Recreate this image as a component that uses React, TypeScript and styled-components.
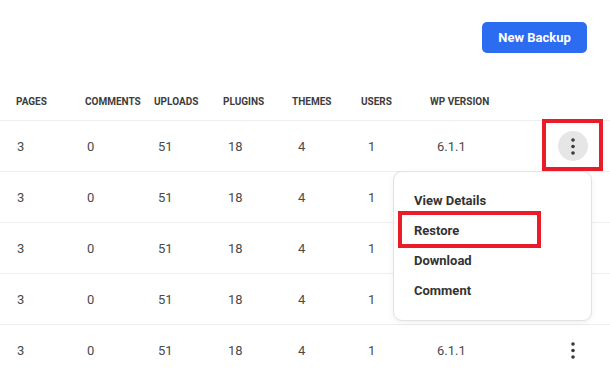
import styled, { createGlobalStyle } from "styled-components"

const GlobalStyle = createGlobalStyle`
  html, body {
    margin: 0;
    padding: 0;
    background: #fff;
    font-family: Roboto, "Liberation Sans", Arial, sans-serif;
    overflow: hidden;
  }
`

const columns = [
  { title: "Pages", key: "pages", indent: 1 },
  { title: "Comments", key: "comments", indent: 2 },
  { title: "Uploads", key: "uploads", indent: 4 },
  { title: "Plugins", key: "plugins", indent: 5 },
  { title: "Themes", key: "themes", indent: 6 },
  { title: "Users", key: "users", indent: 7 },
  { title: "WP Version", key: "wp", indent: 7 },
]

type Backup = { [key: string]: string }

const backups: Backup[] = Array.from({ length: 5 }, () => ({
  pages: "3",
  comments: "0",
  uploads: "51",
  plugins: "18",
  themes: "4",
  users: "1",
  wp: "6.1.1",
}))

const menuItems = ["View Details", "Restore", "Download", "Comment"]

const Dots = () => (
  <svg width="4" height="17" viewBox="0 0 4 17">
    <circle cx="2" cy="2" r="1.8" fill="#3a3a3a" />
    <circle cx="2" cy="8.5" r="1.8" fill="#3a3a3a" />
    <circle cx="2" cy="15" r="1.8" fill="#3a3a3a" />
  </svg>
)

const App = () => {
  return (
    <Page>
      <GlobalStyle />
      <TopBar>
        <PrimaryButton>New Backup</PrimaryButton>
      </TopBar>
      <Table>
        <HeaderRow>
          {columns.map((c) => (
            <HeadCell key={c.key}>{c.title}</HeadCell>
          ))}
        </HeaderRow>
        {backups.map((b, i) => (
          <Row key={i}>
            {columns.map((c) => (
              <Cell key={c.key} $indent={c.indent}>
                {b[c.key]}
              </Cell>
            ))}
            <ActionCell>
              {i === 0 ? (
                <ButtonWrap>
                  <KebabButton $active>
                    <Dots />
                  </KebabButton>
                  <ButtonMark />
                  <Menu>
                    {menuItems.map((m) => (
                      <MenuItem key={m}>
                        {m}
                        {m === "Restore" && <ItemMark />}
                      </MenuItem>
                    ))}
                  </Menu>
                </ButtonWrap>
              ) : i === 4 ? (
                <KebabButton>
                  <Dots />
                </KebabButton>
              ) : null}
            </ActionCell>
          </Row>
        ))}
      </Table>
    </Page>
  )
}

export default App

const Page = styled.div`
  width: 610px;
  height: 371px;
  overflow: hidden;
  background: #fff;
`

const TopBar = styled.div`
  height: 82px;
  display: flex;
  justify-content: flex-end;
  align-items: flex-start;
  padding-right: 23px;
  box-sizing: border-box;
`

const PrimaryButton = styled.button`
  margin-top: 22px;
  width: 105px;
  height: 31px;
  border: 0;
  border-radius: 5px;
  background: #2b6cf0;
  color: #fff;
  font-family: Roboto, "Liberation Sans", Arial, sans-serif;
  font-size: 13px;
  font-weight: 700;
  cursor: pointer;
`

const Table = styled.div`
  display: flex;
  flex-direction: column;
`

const HeaderRow = styled.div`
  display: flex;
  align-items: center;
  height: 38px;
  padding-left: 16px;
  border-bottom: 1px solid #eeeeee;
`

const HeadCell = styled.div`
  width: 69px;
  font-size: 10px;
  font-weight: 700;
  text-transform: uppercase;
  color: #3d3d3d;
  white-space: nowrap;
  padding-top: 1px;
`

const Row = styled.div`
  display: flex;
  align-items: center;
  height: 50px;
  padding-left: 16px;
  border-bottom: 1px solid #eeeeee;
`

const Cell = styled.div<{ $indent: number }>`
  width: 69px;
  box-sizing: border-box;
  padding-left: ${(p) => p.$indent}px;
  font-size: 13px;
  color: #4a4a4a;
`

const ActionCell = styled.div`
  flex: 1;
  display: flex;
  justify-content: flex-end;
  padding-right: 22px;
`

const ButtonWrap = styled.div`
  position: relative;
  display: flex;
`

const KebabButton = styled.button<{ $active?: boolean }>`
  width: 30px;
  height: 30px;
  border: 0;
  border-radius: 50%;
  padding: 0;
  display: flex;
  align-items: center;
  justify-content: center;
  background: ${(p) => (p.$active ? "#e6e6e6" : "transparent")};
  cursor: pointer;
`

const ButtonMark = styled.span`
  position: absolute;
  left: -16px;
  right: -15px;
  top: -12px;
  bottom: -10px;
  border: 4px solid #ea1c2a;
  box-sizing: border-box;
  pointer-events: none;
`

const Menu = styled.div`
  position: absolute;
  top: 40px;
  right: -4px;
  width: 199px;
  box-sizing: border-box;
  padding: 13px 0 15px;
  background: #fff;
  border: 1px solid #e2e2e2;
  border-radius: 9px;
  box-shadow: 0 2px 6px rgba(0, 0, 0, 0.06);
  z-index: 2;
`

const MenuItem = styled.div`
  position: relative;
  height: 30px;
  display: flex;
  align-items: center;
  padding-left: 20px;
  font-size: 13px;
  font-weight: 700;
  color: #333;
  white-space: nowrap;
`

const ItemMark = styled.span`
  position: absolute;
  left: 4px;
  right: 50px;
  top: -4px;
  bottom: -3px;
  border: 4px solid #ea1c2a;
  box-sizing: border-box;
`
